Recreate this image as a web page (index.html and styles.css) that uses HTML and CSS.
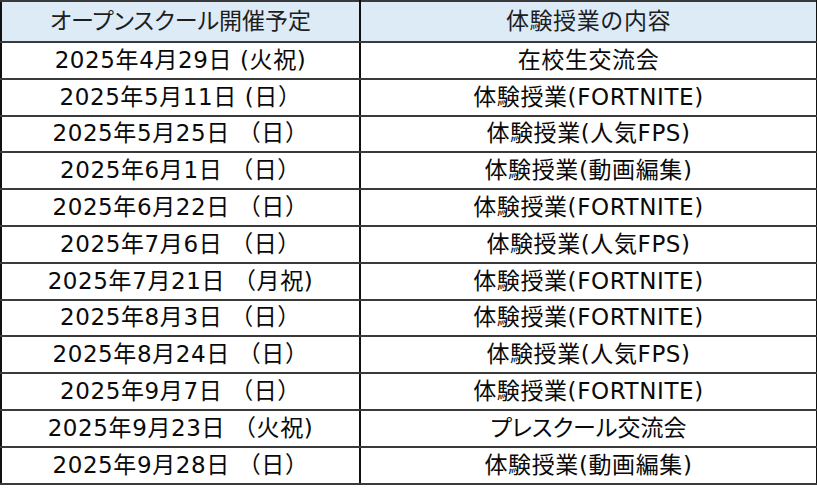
FILE: index.html
```html
<!DOCTYPE html>
<html lang="ja">
<head>
<meta charset="utf-8">
<title>オープンスクール開催予定</title>
<link rel="stylesheet" href="styles.css">
</head>
<body>
<table class="schedule">
  <colgroup><col class="c-date"><col class="c-content"></colgroup>
  <thead>
    <tr class="head-row"><th class="kana">オープンスクール開催予定</th><th>体験授業の内容</th></tr>
  </thead>
  <tbody>
    <tr><td>2025年4月29日 (火祝)</td><td>在校生交流会</td></tr>
    <tr><td>2025年5月11日 (日）</td><td>体験授業(FORTNITE)</td></tr>
    <tr><td>2025年5月25日 （日）</td><td>体験授業(人気FPS)</td></tr>
    <tr><td>2025年6月1日 （日）</td><td>体験授業(動画編集)</td></tr>
    <tr><td>2025年6月22日 （日）</td><td>体験授業(FORTNITE)</td></tr>
    <tr><td>2025年7月6日 （日）</td><td>体験授業(人気FPS)</td></tr>
    <tr><td>2025年7月21日 （月祝)</td><td>体験授業(FORTNITE)</td></tr>
    <tr><td>2025年8月3日 （日）</td><td>体験授業(FORTNITE)</td></tr>
    <tr><td>2025年8月24日 （日）</td><td>体験授業(人気FPS)</td></tr>
    <tr><td>2025年9月7日 （日）</td><td>体験授業(FORTNITE)</td></tr>
    <tr><td>2025年9月23日 （火祝)</td><td class="kana">プレスクール交流会</td></tr>
    <tr><td>2025年9月28日 （日）</td><td>体験授業(動画編集)</td></tr>
  </tbody>
</table>
</body>
</html>
```

FILE: styles.css
```css
html, body {
  margin: 0;
  padding: 0;
  background: #ffffff;
}

.schedule {
  border-collapse: collapse;
  table-layout: fixed;
  width: 816px;
  margin: 0;
  font-family: "DejaVu Sans", "Noto Sans CJK JP", sans-serif;
  font-size: 23px;
  letter-spacing: 0.6px;
  color: #0a0a0a;
}

.c-date { width: 359px; }
.c-content { width: 457px; }

.schedule th,
.schedule td {
  border-top: 2px solid #3a3a3a;
  border-bottom: 2px solid #3a3a3a;
  border-left: 2px solid #111;
  border-right: 2px solid #111;
  text-align: center;
  vertical-align: middle;
  padding: 0;
  white-space: nowrap;
  font-weight: normal;
  line-height: 1;
}

.head-row th {
  background: #ddebf7;
  color: #1e1e1e;
  height: 39px;
}

.schedule tbody td {
  height: 34.8px;
}

.kana {
  font-feature-settings: "palt";
  letter-spacing: 0;
}
```
